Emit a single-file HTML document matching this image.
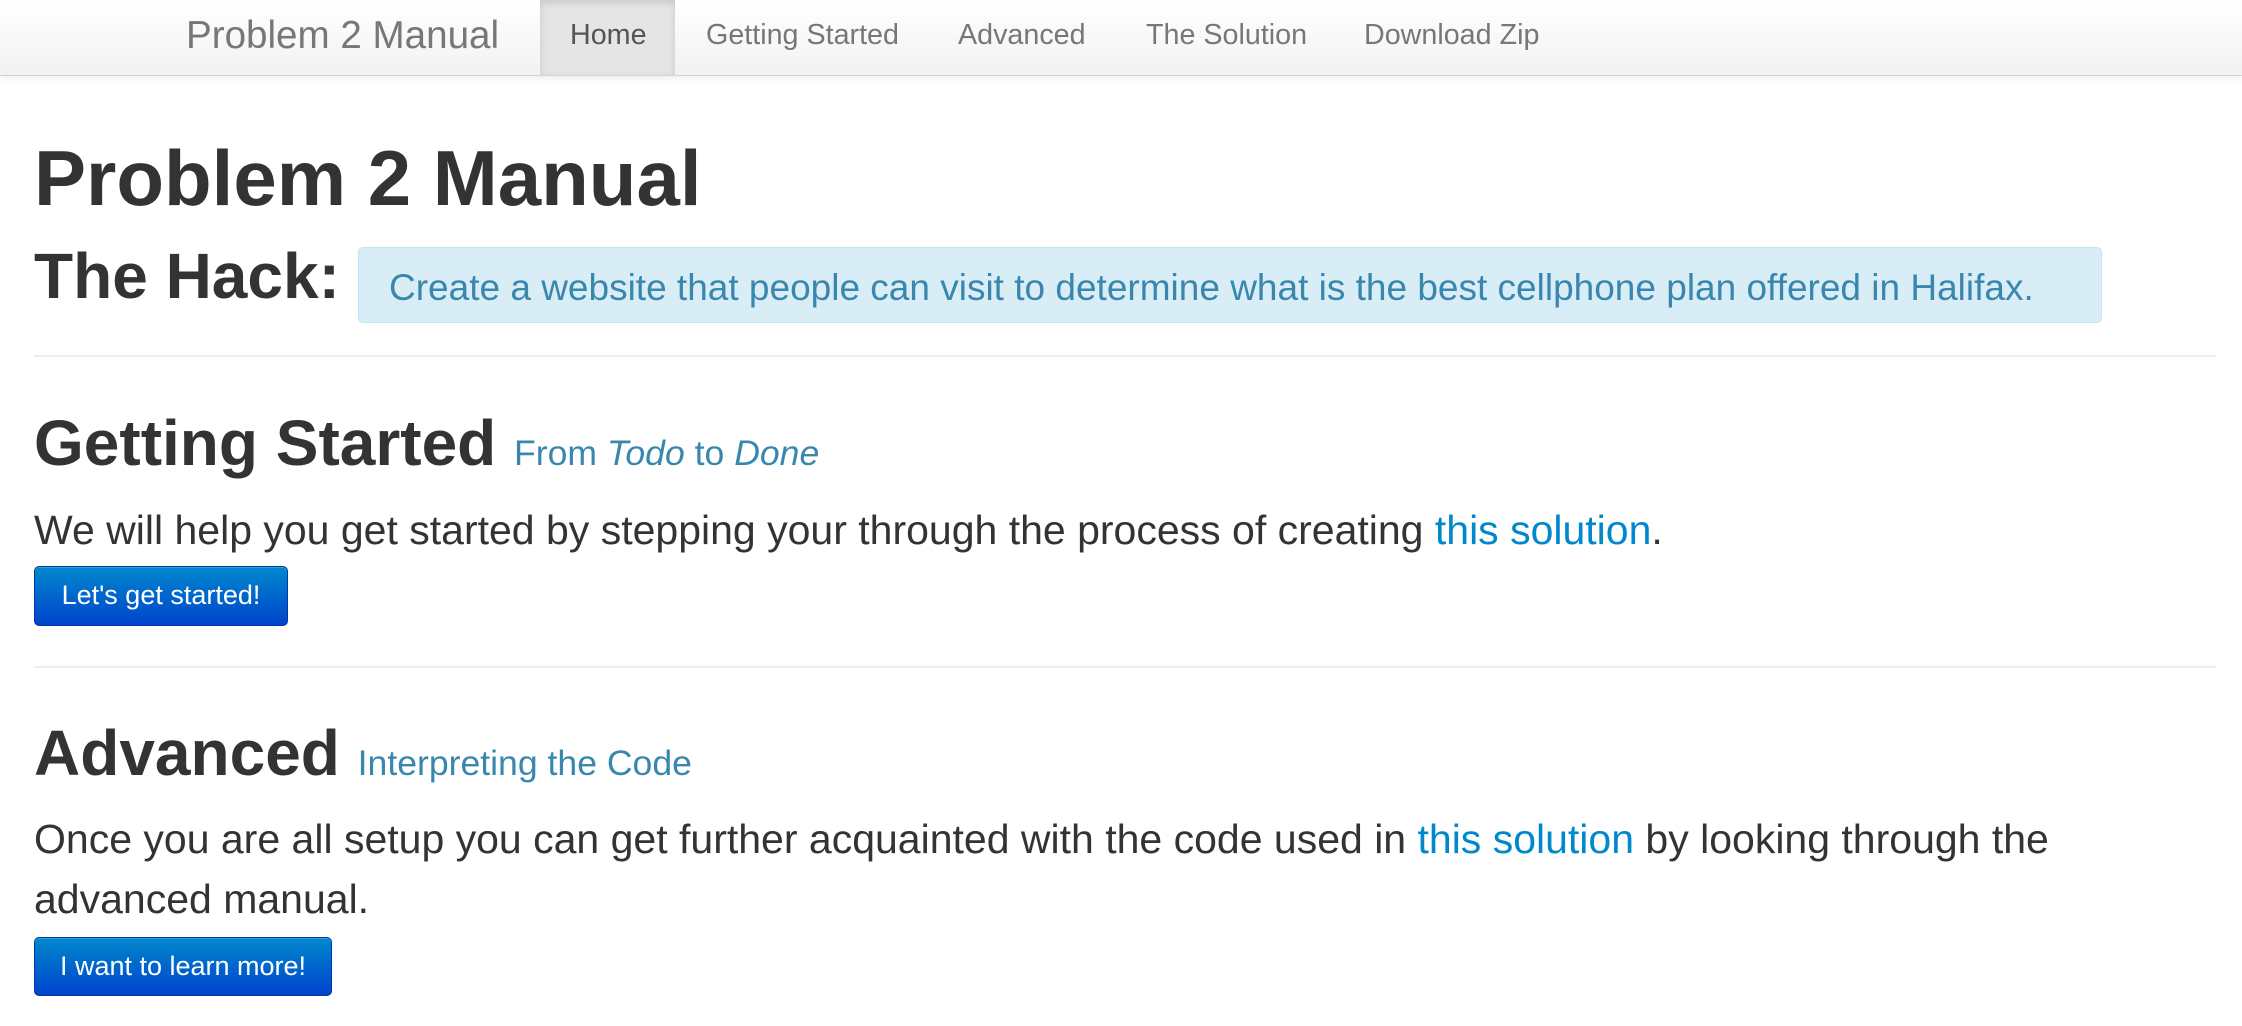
<!DOCTYPE html>
<html><head><meta charset="utf-8"><style>
body{margin:0;width:2242px;height:1026px;overflow:hidden;background:#fff;font-family:"Liberation Sans",sans-serif;color:#333;position:relative}
.nav{position:absolute;left:0;top:0;width:2242px;height:75px;background:linear-gradient(#fff,#f2f2f2);border-bottom:1px solid #d4d4d4;box-shadow:0 2px 8px rgba(0,0,0,.08)}
.a{position:absolute;white-space:nowrap}
.brand{left:186px;top:14px;font-size:38.6px;color:#777}
.ni{top:19px;font-size:28.7px;color:#777}
.home{position:absolute;left:540px;top:0;width:135px;height:75px;background:#e5e5e5;box-shadow:inset 0 3px 8px rgba(0,0,0,.125)}
h1,h2{margin:0;font-weight:bold;color:#333}
.alert{position:absolute;left:358px;top:247px;width:1744px;height:76px;background:#d9edf7;border:1px solid #bce8f1;border-radius:5px;box-sizing:border-box}
.hr{position:absolute;left:34px;width:2182px;height:0;border-top:2px solid #eee}
small{color:#3a87ad;font-size:35.6px;font-weight:normal}
.p{font-size:41px;color:#333}
.lk{color:#0088cc}
.btn{position:absolute;background:linear-gradient(#0088cc,#0044cc);border:1px solid #0038a8;border-radius:5px;color:#fff;font-size:27px;text-align:center;box-sizing:border-box;line-height:56px;box-shadow:inset 0 1px 0 rgba(255,255,255,.2)}
</style></head><body>
<div class="nav">
<div class="home"></div>
<div class="a brand">Problem 2 Manual</div>
<div class="a ni" style="left:570px;color:#555">Home</div>
<div class="a ni" style="left:706px">Getting Started</div>
<div class="a ni" style="left:958px">Advanced</div>
<div class="a ni" style="left:1146px">The Solution</div>
<div class="a ni" style="left:1364px">Download Zip</div>
</div>
<h1 class="a" style="left:34px;top:133px;font-size:78px">Problem 2 Manual</h1>
<h2 class="a" style="left:34px;top:239px;font-size:64px">The Hack:</h2>
<div class="alert"></div>
<div class="a" style="left:389px;top:267px;font-size:37px;color:#3a87ad">Create a website that people can visit to determine what is the best cellphone plan offered in Halifax.</div>
<div class="hr" style="top:355px"></div>
<h2 class="a" style="left:34px;top:406px;font-size:64px">Getting Started <small>From <i>Todo</i> to <i>Done</i></small></h2>
<div class="a p" style="left:34px;top:507px">We will help you get started by stepping your through the process of creating <span class="lk">this solution</span>.</div>
<div class="btn" style="left:34px;top:566px;width:254px;height:60px">Let's get started!</div>
<div class="hr" style="top:666px"></div>
<h2 class="a" style="left:34px;top:716px;font-size:64px">Advanced <small>Interpreting the Code</small></h2>
<div class="a p" style="left:34px;top:816px">Once you are all setup you can get further acquainted with the code used in <span class="lk">this solution</span> by looking through the</div>
<div class="a p" style="left:34px;top:876px">advanced manual.</div>
<div class="btn" style="left:34px;top:937px;width:298px;height:59px">I want to learn more!</div>
</body></html>
